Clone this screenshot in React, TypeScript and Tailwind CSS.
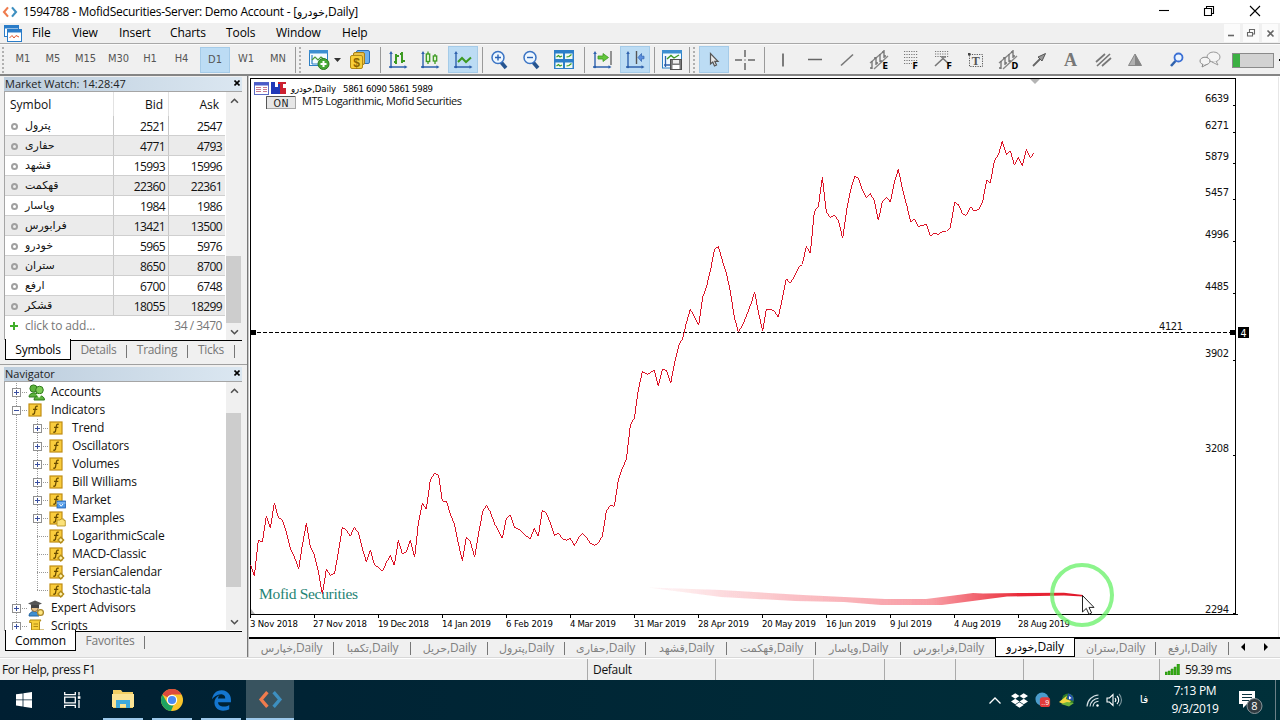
import React from "react";
import { FaDropbox, FaEdgeLegacy } from "react-icons/fa6";

type Kids = { children?: React.ReactNode };

const UI = "font-['Open_Sans','DejaVu_Sans',sans-serif]";

function Ico({ children, s = 20 }: Kids & { s?: number }) {
  return (
    <svg width={s} height={s} viewBox={`0 0 ${s} ${s}`} fill="none" className="block shrink-0">
      {children}
    </svg>
  );
}

function Axes() {
  return (
    <g stroke="#2f62ad" strokeWidth="1.4" fill="#2f62ad">
      <path d="M3 3V18M1 17H18" />
      <path d="M1.2 4L3 1L4.8 4ZM16.5 15.2L19.5 17L16.5 18.8Z" stroke="none" />
      <circle cx="3" cy="17" r="1.2" stroke="none" />
    </g>
  );
}

const Mt5Logo = ({ size }: { size: number }) => (
  <svg width={size} height={size} viewBox="0 0 24 24" fill="none" strokeWidth="3.2">
    <path d="M9 5L3 12L9 19" stroke="#ef7b4d" />
    <path d="M15 5L21 12L15 19" stroke="#3d8fc0" />
  </svg>
);

/* ---------- Toolbar ---------- */

const timeframes = [
  { t: "M1", c: "w-[30px]" },
  { t: "M5", c: "w-[30px]" },
  { t: "M15", c: "w-[35px]" },
  { t: "M30", c: "w-[31px]" },
  { t: "H1", c: "w-[32px]" },
  { t: "H4", c: "w-[31px]" },
  { t: "D1", c: "w-[30px] ml-[3px] bg-[#bcdcf4] border border-[#a5cbe8] pt-px" },
  { t: "W1", c: "w-[32px]" },
  { t: "MN", c: "w-[32px]" },
];

const Cell = ({ c, children }: Kids & { c: string }) => (
  <div className={`flex h-[27px] shrink-0 items-center justify-center ${c}`}>{children}</div>
);
const Sep = ({ c }: { c: string }) => (
  <div className={`flex shrink-0 justify-center ${c}`}>
    <div className="h-[26px] w-px bg-[#9a9a9a]" />
  </div>
);
const Grip = ({ c }: { c: string }) => (
  <div className={`h-[26px] w-[2px] shrink-0 bg-[repeating-linear-gradient(#b0b0b0_0_2px,transparent_2px_4px)] ${c}`} />
);
const ACTIVE = "bg-[#bcdcf4] border border-[#a5cbe8]";

const Channel = ({ letter }: { letter: string }) => (
  <Ico s={22}>
    <path d="M2 14L15 3M6 20L20 7" stroke="#888" strokeWidth="1.4" />
    <path d="M4 12V20M2 19H4M8 8V16M6 9H8M8 14H10M12 5V13M12 12H14M16 1V9M14 3H16M16 7H18" stroke="#707070" strokeWidth="1.3" />
    <text x="14.5" y="20" fontSize="9" fontWeight="700" fill="#000" fontFamily="DejaVu Sans Condensed">{letter}</text>
  </Ico>
);

function Toolbar() {
  return (
    <div className="flex h-[32px] items-center border-b-2 border-[#858585] border-t border-t-[#fafafa] bg-[#f0f0f0]">
      <Grip c="ml-[2px] mr-[4px]" />
      {timeframes.map((f) => (
        <div key={f.t} className={`flex h-[26px] shrink-0 items-center justify-center text-[11px] text-[#555] font-['DejaVu_Sans_Condensed','DejaVu_Sans',sans-serif] ${f.c}`}>
          {f.t}
        </div>
      ))}
      <Sep c="w-[2px]" />
      <Grip c="ml-[3px] mr-[2px]" />
      <Cell c="w-[31px]">
        <Ico s={22}>
          <rect x="1.5" y="1.5" width="18" height="15" fill="#f4fbff" stroke="#2d7fc4" />
          <rect x="1" y="1" width="19" height="3.5" fill="#3d8fd1" />
          <path d="M4 6V15M4 15H12" stroke="#2d7fc4" strokeWidth="1.2" />
          <path d="M4 11L7 8L10 11L13 8L17 11" stroke="#4b9a3a" strokeWidth="1.2" />
          <circle cx="15.5" cy="15" r="5.5" fill="#45a835" stroke="#2c7a22" />
          <path d="M15.5 12V18M12.5 15H18.5" stroke="#fff" strokeWidth="2" />
        </Ico>
      </Cell>
      <Cell c="w-[7px]">
        <svg width="7" height="4" viewBox="0 0 7 4"><path d="M0 0H7L3.5 4Z" fill="#333" /></svg>
      </Cell>
      <Cell c="w-[38px]">
        <Ico s={22}>
          <rect x="7.5" y="1.5" width="13" height="13" rx="1.5" fill="#6fb1ec" stroke="#2c6fb5" />
          <rect x="4.5" y="3.5" width="11" height="12" rx="1.5" fill="#e9c34b" stroke="#a87f14" />
          <rect x="1.5" y="6.5" width="12" height="13" rx="1.5" fill="#f8cf3a" stroke="#b18a17" />
          <text x="4.2" y="17.5" fontSize="12" fontWeight="700" fill="#8c6500" fontFamily="Liberation Sans">$</text>
        </Ico>
      </Cell>
      <Sep c="w-[3px]" />
      <Cell c="w-[32px]">
        <Ico>
          <Axes />
          <path d="M8 4V14M6 12H8M8 6H11M14 2V13M12 4H14M14 11H17" stroke="#3c9a22" strokeWidth="2" />
        </Ico>
      </Cell>
      <Cell c="w-[32px]">
        <Ico>
          <Axes />
          <path d="M8 1.5V14M15 4V14" stroke="#3c9a22" strokeWidth="1.3" />
          <rect x="6.3" y="4" width="3.4" height="7.5" fill="#dff5cf" stroke="#3c9a22" strokeWidth="1.3" />
          <rect x="13.3" y="6" width="3.4" height="5" fill="#dff5cf" stroke="#3c9a22" strokeWidth="1.3" />
        </Ico>
      </Cell>
      <Cell c={`mx-[2px] w-[30px] ${ACTIVE}`}>
        <Ico>
          <Axes />
          <path d="M5 12L9 8L13 12L18 7.5" stroke="#3c9a22" strokeWidth="2" />
        </Ico>
      </Cell>
      <Sep c="w-[4px]" />
      {["in", "out"].map((k) => (
        <Cell key={k} c="w-[32px]">
          <Ico>
            <path d="M10.5 11.5L16 18" stroke="#26548f" strokeWidth="3.6" />
            <circle cx="8" cy="7.5" r="6" fill="#eef7ff" stroke="#3b74c4" strokeWidth="1.5" />
            <path d={k === "in" ? "M5 7.5H11M8 4.5V10.5" : "M5 7.5H11"} stroke="#2b63b5" strokeWidth="1.4" />
          </Ico>
        </Cell>
      ))}
      <Cell c="w-[32px]">
        <Ico>
          <rect x="0" y="0" width="20" height="19" fill="#2c7fc9" />
          <path d="M1.5 3.5H9V9H1.5ZM11 3.5H18.5V9H11ZM1.5 12.5H9V18H1.5ZM11 12.5H18.5V18H11Z" fill="#f1fbf4" />
          <path d="M2.5 7L4.5 5.5L6 7L8 6M12.5 7L15 6.5L17.5 4.5M2.5 16L4.5 14.5L6 16L8 15M12.5 16L15 15.5L17.5 13.5" stroke="#3c9a22" strokeWidth="1.2" />
        </Ico>
      </Cell>
      <Sep c="w-[8px]" />
      <Cell c="w-[28px]">
        <Ico>
          <Axes />
          <path d="M19 1V15" stroke="#555" strokeWidth="1.2" />
          <path d="M6 6H11V3.5L16.5 7.5L11 11.5V9H6Z" fill="#62c63a" stroke="#3c9a22" strokeWidth=".8" />
        </Ico>
      </Cell>
      <Cell c={`ml-[4px] mr-[2px] w-[30px] ${ACTIVE}`}>
        <Ico>
          <Axes />
          <path d="M11.5 1V14" stroke="#555" strokeWidth="1.4" />
          <path d="M19 6.2V8.8H16.5V11.5L13 7.5L16.5 3.5V6.2Z" fill="#5b8fe0" stroke="#2f62ad" strokeWidth=".7" />
        </Ico>
      </Cell>
      <Sep c="w-[4px]" />
      <Cell c="w-[32px]">
        <Ico>
          <rect x=".5" y="1" width="19" height="17" fill="#f4fbff" stroke="#2d7fc4" />
          <rect x="0" y="0" width="20" height="3.5" fill="#3d8fd1" />
          <path d="M3.5 6V17M2 15H8" stroke="#2f62ad" strokeWidth="1.3" />
          <path d="M5 9L9 5.5L12 8L17 5" stroke="#3c9a22" strokeWidth="1.4" />
          <rect x="8.5" y="9.5" width="11" height="10" fill="#7b7b7b" stroke="#505050" />
          <rect x="11" y="10" width="6" height="3.5" fill="#eee" />
          <rect x="10.5" y="15" width="7" height="4" fill="#fff" />
        </Ico>
      </Cell>
      <Sep c="w-[2px]" />
      <Grip c="ml-[3px] mr-[4px]" />
      <Cell c={`w-[30px] ${ACTIVE}`}>
        <Ico s={16}>
          <path d="M4.5 1.5V12L6.8 10L8.5 14L10.5 13L8.8 9.3H12Z" fill="#e8e8e8" stroke="#555" strokeWidth="1.2" />
        </Ico>
      </Cell>
      <Cell c="w-[32px]">
        <Ico><path d="M10 0V7M10 13V20M0 10H7M13 10H20M9.5 10H10.5" stroke="#666" strokeWidth="1.5" /></Ico>
      </Cell>
      <Sep c="w-[6px]" />
      <Cell c="w-[32px]"><Ico><path d="M10 3.5V16.5" stroke="#555" strokeWidth="1.5" /></Ico></Cell>
      <Cell c="w-[32px]"><Ico><path d="M3 9.5H17" stroke="#666" strokeWidth="1.5" /></Ico></Cell>
      <Cell c="w-[32px]"><Ico><path d="M4 15.5L16 4.5" stroke="#777" strokeWidth="1.6" /></Ico></Cell>
      <Cell c="w-[32px]"><Channel letter="E" /></Cell>
      <Cell c="w-[32px]">
        <Ico s={22}>
          <path d="M4 2.5H18M4 5.5H18M4 8.5H18M4 11.5H18M4 14.5H12" stroke="#777" strokeWidth="1.2" strokeDasharray="1.2 1.2" />
          <text x="12.5" y="20" fontSize="9" fontWeight="700" fill="#000" fontFamily="DejaVu Sans Condensed">F</text>
        </Ico>
      </Cell>
      <Cell c="w-[32px]">
        <Ico s={22}>
          <path d="M3 2.5H17M3 5H17M3 7.5H17" stroke="#777" strokeWidth="1.2" strokeDasharray="1.2 1.2" />
          <path d="M3 17L11 9.5L17 15M9 8H14" stroke="#777" strokeWidth="1.6" />
          <text x="14.5" y="20" fontSize="9" fontWeight="700" fill="#000" fontFamily="DejaVu Sans Condensed">F</text>
        </Ico>
      </Cell>
      <Cell c="w-[33px]">
        <Ico>
          <rect x="3.5" y="4.5" width="13" height="12" stroke="#555" strokeDasharray="1.2 1.2" />
          <rect x="2" y="3" width="2.5" height="2.5" fill="#444" />
          <text x="5.8" y="15" fontSize="12" fontWeight="700" fill="#555" fontFamily="Liberation Serif">T</text>
        </Ico>
      </Cell>
      <Cell c="w-[32px]"><Channel letter="D" /></Cell>
      <Cell c="w-[30px]">
        <Ico>
          <path d="M4 16L11 9" stroke="#666" strokeWidth="1.8" />
          <path d="M16.5 3.5L9 7L13 11Z" fill="#999" stroke="#555" />
        </Ico>
      </Cell>
      <Cell c="w-[33px]">
        <div className="font-['Liberation_Serif',serif] text-[18px] font-bold leading-none text-[#777]">A</div>
      </Cell>
      <Cell c="w-[32px]"><Ico><path d="M3 12L12 4M4 16L17 4M9 16L18 8" stroke="#777" strokeWidth="1.7" /></Ico></Cell>
      <Cell c="w-[32px]">
        <Ico>
          <path d="M10 4L16.5 15.5H3.5Z" fill="#b0b0b0" stroke="#888" />
          <path d="M10 4L16.5 15.5H10Z" fill="#858585" />
        </Ico>
      </Cell>
      <Cell c="ml-[10px] w-[32px]">
        <Ico s={16}>
          <path d="M6.5 9L2 14" stroke="#2f62ad" strokeWidth="2.6" />
          <circle cx="9.5" cy="5.5" r="4" fill="#eaf4ff" stroke="#3b6fd4" strokeWidth="1.8" />
        </Ico>
      </Cell>
      <Cell c="w-[34px]">
        <Ico s={22}>
          <ellipse cx="14.5" cy="8" rx="6.5" ry="5" fill="#f4f4f4" stroke="#999" />
          <path d="M17 12L19 16L13 13" fill="#f4f4f4" stroke="#999" />
          <ellipse cx="6" cy="12" rx="5" ry="3.8" fill="#f4f4f4" stroke="#888" />
          <path d="M4 15L3 18L7.5 15.6" fill="#f4f4f4" stroke="#888" />
        </Ico>
      </Cell>
      <div className="ml-[5px] mt-px flex h-[15px] w-[42px] shrink-0 border border-[#8a8a8a] bg-[#d2d2d2]">
        <div className="w-[7px] bg-[#3cb043]" />
      </div>
      <div className="ml-[5px] h-[2px] w-[2px] bg-black" />
    </div>
  );
}

/* ---------- Left panels ---------- */

const quotes = [
  ["پترول", "2521", "2547"],
  ["حفاری", "4771", "4793"],
  ["قشهد", "15993", "15996"],
  ["قهکمت", "22360", "22361"],
  ["وپاسار", "1984", "1986"],
  ["فرابورس", "13421", "13500"],
  ["خودرو", "5965", "5976"],
  ["ستران", "8650", "8700"],
  ["ارفع", "6700", "6748"],
  ["قشکر", "18055", "18299"],
];

const PanelHead = ({ children }: Kids) => (
  <div className="flex h-[14px] items-center justify-between bg-linear-to-r from-[#bccddd] to-[#dbe7f1] pb-[2px] pl-px pr-[2px] text-[11px] leading-none text-[#222]">
    <span>{children}</span>
    <svg width="6" height="6" viewBox="0 0 6 6" stroke="#000" strokeWidth="1.6"><path d="M.5 .5L5.5 5.5M5.5 .5L.5 5.5" /></svg>
  </div>
);

const Chevron = ({ up }: { up?: boolean }) => (
  <svg width="9" height="6" viewBox="0 0 10 7" fill="none" stroke="#505050" strokeWidth="1.9">
    <path d={up ? "M1 5.5L5 1.5L9 5.5" : "M1 1.5L5 5.5L9 1.5"} />
  </svg>
);

const Scroll = ({ thumb }: { thumb: string }) => (
  <div className="flex w-[16px] shrink-0 flex-col items-center bg-[#f0f0f0]">
    <div className="flex h-[18px] items-center"><Chevron up /></div>
    <div className="flex w-full flex-1 flex-col pr-px"><div className={`bg-[#cdcdcd] ${thumb}`} /></div>
    <div className="flex h-[16px] items-center"><Chevron /></div>
  </div>
);

function MarketWatch() {
  return (
    <div className="flex h-[288px] flex-col border-b border-[#a0a0a0] pl-[4px] pr-[5px]">
      <PanelHead>Market Watch: 14:28:47</PanelHead>
      <div className="flex h-[249px] border-l border-t border-[#a5a5a5] bg-white text-[12px] text-[#111]">
        <div className="flex w-[220px] shrink-0 flex-col">
          <div className="flex h-[24px] shrink-0 items-center">
            <div className="h-full w-[109px] border-r border-[#e2e2e2] pl-[5px] leading-[25px]">Symbol</div>
            <div className="h-full w-[55px] border-r border-[#e2e2e2] pr-[5px] text-right leading-[25px]">Bid</div>
            <div className="h-full w-[56px] pr-[6px] text-right leading-[25px]">Ask</div>
          </div>
          {quotes.map(([s, b, a], i) => (
            <div key={s} className={`flex h-[20px] shrink-0 items-center border-b border-[#cfcfcf] leading-[20px] ${i % 2 ? "bg-[#ebebeb]" : "bg-white"}`}>
              <div className="flex h-full w-[109px] items-center border-r border-[#c8c8c8] pl-[6px] pt-px">
                <div className="mr-[7px] h-[7px] w-[7px] rounded-full border-2 border-[#a0a0a0]" />
                <span className="font-['DejaVu_Sans',sans-serif] text-[11px]">{s}</span>
              </div>
              <div className="h-full w-[55px] border-r border-[#c8c8c8] pr-[3px] pt-px text-right leading-[19px] tracking-[-0.6px]">{b}</div>
              <div className="h-full w-[56px] pr-[3px] pt-px text-right leading-[19px] tracking-[-0.6px]">{a}</div>
            </div>
          ))}
          <div className="flex h-[20px] items-center pl-[5px] pr-[3px] text-[#777]">
            <svg width="8" height="8" viewBox="0 0 8 8" stroke="#3fae29" strokeWidth="2"><path d="M4 0V8M0 4H8" /></svg>
            <span className="ml-[7px] flex-1 tracking-[-0.15px]">click to add...</span>
            <span className="tracking-[-0.45px]">34 / 3470</span>
          </div>
        </div>
        <div className="w-px" />
        <Scroll thumb="mt-[146px] h-[67px]" />
      </div>
      <div className="flex h-[20px] text-[12px] leading-[18px] text-[#777]">
        <div className="ml-px mt-[-1px] h-[21px] w-[66px] shrink-0 border border-t-0 border-black bg-white text-center leading-[21px] tracking-[-0.25px] text-black">Symbols</div>
        <div className="flex flex-1 border-t border-black tracking-[-0.3px]">
          <div className="w-[55px] text-center">Details</div>
          <div className="mt-[4px] h-[13px] w-px bg-[#777]" />
          <div className="w-[60px] text-center">Trading</div>
          <div className="mt-[4px] h-[13px] w-px bg-[#777]" />
          <div className="w-[46px] text-center">Ticks</div>
          <div className="mt-[4px] h-[13px] w-px bg-[#777]" />
        </div>
      </div>
    </div>
  );
}

type Kind = "acc" | "f" | "market" | "folder" | "ind" | "ea" | "script";
const tree: { l: 0 | 1; t: string; k: Kind; e?: "+" | "-" }[] = [
  { l: 0, t: "Accounts", k: "acc", e: "+" },
  { l: 0, t: "Indicators", k: "f", e: "-" },
  { l: 1, t: "Trend", k: "f", e: "+" },
  { l: 1, t: "Oscillators", k: "f", e: "+" },
  { l: 1, t: "Volumes", k: "f", e: "+" },
  { l: 1, t: "Bill Williams", k: "f", e: "+" },
  { l: 1, t: "Market", k: "market", e: "+" },
  { l: 1, t: "Examples", k: "folder", e: "+" },
  { l: 1, t: "LogarithmicScale", k: "ind" },
  { l: 1, t: "MACD-Classic", k: "ind" },
  { l: 1, t: "PersianCalendar", k: "ind" },
  { l: 1, t: "Stochastic-tala", k: "ind" },
  { l: 0, t: "Expert Advisors", k: "ea", e: "+" },
  { l: 0, t: "Scripts", k: "script", e: "+" },
];

function NodeIcon({ k }: { k: Kind }) {
  if (k === "acc")
    return (
      <Ico s={17}>
        <circle cx="5.5" cy="4.5" r="3.6" fill="#5cb33c" stroke="#2f7a1b" />
        <path d="M1 13C1 8 10 7 11 13Z" fill="#5cb33c" stroke="#2f7a1b" />
        <circle cx="11.5" cy="6" r="3.8" fill="#7ccc55" stroke="#2f7a1b" />
        <path d="M6 16C6 10 16.5 10 16.5 16Z" fill="#5cb33c" stroke="#2f7a1b" />
        <path d="M8 10L11 14L14.5 10Z" fill="#f4fbe8" />
      </Ico>
    );
  if (k === "ea")
    return (
      <Ico s={17}>
        <path d="M1 16C1 10 11 10 11 16Z" fill="#3f8fd0" stroke="#2263a0" />
        <circle cx="6.8" cy="8" r="3.5" fill="#e8c48e" stroke="#8a6a3a" />
        <path d="M0 3.5L7 .5L14 3.5L7 6.5Z" fill="#555" />
        <path d="M3 5V8H11V5" fill="#444" />
        <circle cx="12.5" cy="12.5" r="2.9" fill="#ffe680" stroke="#a8862a" strokeWidth="1.3" />
      </Ico>
    );
  if (k === "script")
    return (
      <Ico s={17}>
        <path d="M2 2H13L11.5 4V13H3.5V4.5H1.5Z" fill="#f8cf3a" stroke="#b18a17" />
        <path d="M4 12H16L13 15.5H2Z" fill="#f3c02a" stroke="#b18a17" />
        <path d="M5.5 6H10M5.5 8.5H10" stroke="#b18a17" />
      </Ico>
    );
  return (
    <Ico s={17}>
      <rect x="1" y="2" width="12" height="12" fill="#f9cc3c" stroke="#c08d13" strokeWidth="1.2" />
      <path d="M9.8 4.3C7.8 3.6 7.5 5 7.2 7L6.5 11C6.2 12.4 5.2 12.4 4.2 12M5 7.3H9.3" stroke="#6a4c00" strokeWidth="1.3" />
      {k === "market" && (
        <>
          <rect x="8" y="9" width="8.5" height="7" fill="#4b97e6" stroke="#225fae" strokeWidth=".8" />
          <path d="M8 11H16.5" stroke="#bfe0ff" strokeWidth=".8" />
          <path d="M10.5 12L12.2 14.2L14 12" stroke="#fff" />
        </>
      )}
      {k === "folder" && <path d="M8 10H11L12 9H15V10.5H16.3V16H8Z" fill="#fbe27a" stroke="#b18a17" strokeWidth=".8" />}
      {k === "ind" && <path d="M11.8 9.3L14.6 12.1L11.8 15L9 12.1Z" fill="#fff3b0" stroke="#b18a17" strokeWidth="1.4" />}
    </Ico>
  );
}

function TreeLines({ l, e, last }: { l: 0 | 1; e?: "+" | "-"; last: boolean }) {
  const cx = l ? 32 : 11;
  const w = l ? 44 : 23;
  return (
    <svg width={w} height="18" viewBox={`0 0 ${w} 18`} fill="none" shapeRendering="crispEdges" className="shrink-0">
      <g stroke="#999" strokeDasharray="1 1">
        <path d="M11.5 0V18" />
        {l === 1 && <path d={last ? "M32.5 0V10" : "M32.5 0V18"} />}
        <path d={`M${cx} 9.5H${cx + 11}`} />
      </g>
      {e && (
        <>
          <rect x={cx - 3.5} y="5.5" width="8" height="8" fill="#fff" stroke="#919191" />
          <path d={`M${cx - 2} 9.5H${cx + 3}${e === "+" ? `M${cx + 0.5} 7V12` : ""}`} stroke="#3a4fa0" />
        </>
      )}
    </svg>
  );
}

function Navigator() {
  return (
    <div className="flex flex-1 flex-col border-b border-[#a0a0a0] pl-[4px] pr-[5px] pt-[2px]">
      <PanelHead>Navigator</PanelHead>
      <div className="flex h-[250px] overflow-hidden border-l border-t border-[#a5a5a5] bg-white pb-px text-[12px] text-[#111]">
        <div className="w-[221px] shrink-0 overflow-hidden pt-px">
          {tree.map((n, i) => (
            <div key={n.t} className="flex h-[18px] items-center">
              <TreeLines l={n.l} e={n.e} last={i === 11} />
              <NodeIcon k={n.k} />
              <span className="ml-[6px] whitespace-nowrap leading-[18px] tracking-[-0.15px]">{n.t}</span>
            </div>
          ))}
        </div>
        <Scroll thumb="mt-[13px] h-[174px]" />
      </div>
      <div className="flex h-[20px] text-[12px] leading-[18px] text-[#777]">
        <div className="ml-px mt-[-1px] h-[21px] w-[71px] shrink-0 border border-t-0 border-black bg-white text-center leading-[21px] tracking-[-0.1px] text-black">Common</div>
        <div className="flex flex-1 border-t border-black tracking-[-0.2px]">
          <div className="w-[68px] text-center">Favorites</div>
          <div className="mt-[4px] h-[13px] w-px bg-[#777]" />
        </div>
      </div>
    </div>
  );
}

/* ---------- Chart ---------- */

const seriesA =
  "2,495 13,527 25,420 37,426 49,349 61,385 73,309 85,352 97,360 109,396 121,445 133,470 146,507 157,436 169,370 181,440 193,465 205,515 217,583 229,508 241,526 254,520 266,450 277,382 289,391 301,408 313,382 326,400 337,445 349,485 361,449 373,494 385,502 397,514 409,488 421,466 433,496 445,421 457,462 469,456 481,421 494,472 505,370 517,310 529,328 541,240 554,219 566,226 577,303 590,304 601,343 614,375 625,430 637,482 649,411 661,424 674,472 686,400 698,335 709,316 721,335 733,370 745,391 757,415 769,355 781,346 793,381 805,387 817,397 829,408 841,416 853,385 865,409 877,331 889,340 901,368 913,406 925,399 937,416 949,421 961,415 973,437 985,415 997,400 1009,412 1021,430 1033,436 1045,430 1057,408 1069,334 1081,315 1093,319 1105,240 1117,205 1129,178 1141,76 1153,54";
const seriesB =
  "223,565 235,480 247,424 262,433 283,421 295,469 307,418 319,421 332,460 344,398 356,348 368,325 380,275 391,238 404,262 416,286 428,202 439,172 452,118 463,60 475,49 487,92 500,133 511,185 523,262 535,306 548,286 560,256 572,224 584,187 596,250 608,304 619,238 631,238 643,244 655,262 667,205 679,146 691,160 704,138 716,112 727,103 739,49";
const seriesC =
  "139,379 151,400 163,274 175,260 187,172 199,277 211,292 223,286 235,301 248,355 260,270 272,210 284,169 295,174 307,210 319,233 331,220 343,243 355,301 367,246 379,232 391,246 403,187 415,148 428,210 440,255 452,307 463,297 475,319 487,316 499,313 511,348 523,340 535,343 547,335 559,334 571,322 584,247 596,255 608,282 618,286 632,261 643,273 656,268 668,245 680,181 691,189 703,123 716,102 727,64 739,103 751,92 763,135 775,112 787,138 799,88 811,114 822,99";

const prices: [string, number][] = [
  ["6639", 98], ["6271", 125], ["5879", 156], ["5457", 192], ["4996", 234],
  ["4485", 286], ["3902", 353], ["3208", 448], ["2294", 609],
];
const dates: [string, number, number][] = [
  ["3 Nov 2018", 250, 48], ["27 Nov 2018", 313, 54], ["19 Dec 2018", 378, 51], ["14 Jan 2019", 442, 49],
  ["6 Feb 2019", 506, 47], ["4 Mar 2019", 570, 46], ["31 Mar 2019", 634, 52], ["28 Apr 2019", 698, 51],
  ["20 May 2019", 762, 54], ["16 Jun 2019", 826, 50], ["9 Jul 2019", 890, 42], ["4 Aug 2019", 954, 47],
  ["28 Aug 2019", 1018, 52],
];

function Chart() {
  const tahoma = "'DejaVu Sans Condensed','DejaVu Sans',sans-serif";
  return (
    <svg width="1031" height="560" viewBox="249 77 1031 560" className="block bg-white" fontFamily={tahoma}>
      <defs>
        <linearGradient id="trail" gradientUnits="userSpaceOnUse" x1="652" y1="0" x2="1083" y2="0">
          <stop offset="0" stopColor="#f03040" stopOpacity="0.04" />
          <stop offset=".3" stopColor="#f03040" stopOpacity=".28" />
          <stop offset=".65" stopColor="#f03040" stopOpacity=".48" />
          <stop offset=".85" stopColor="#e82030" stopOpacity=".95" />
          <stop offset="1" stopColor="#e01828" stopOpacity="1" />
        </linearGradient>
        <filter id="soft"><feGaussianBlur stdDeviation="0.6" /></filter>
      </defs>
      <g stroke="#000" shapeRendering="crispEdges" fill="none">
        <path d="M250.5 78V615M250 78.5H1236M1235.5 78V614M250 614.5H1238" />
        {dates.map(([t], i) => <path key={t} d={`M${250.5 + 64 * i} 614V618`} />)}
        {prices.map(([t, y]) => <path key={t} d={`M1233 ${(t === "2294" ? 613 : y + 7) + 0.5}H1236`} />)}
        <path d="M257 332.5H1230" strokeDasharray="3.5 2.5" />
      </g>
      <path d="M1030 79H1040L1035 84Z" fill="#b4b4b4" />
      <path d="M251 609L255 614H251Z" fill="#b4b4b4" />
      <path d="M1278.5 77V637" stroke="#e6e6e6" />
      <text x="259" y="599" fontSize="15.5" fill="#1f8474" fontFamily="'Liberation Serif',serif" textLength="99">Mofid Securities</text>
      <g fill="none" stroke="#dc1428" strokeWidth="3" shapeRendering="crispEdges">
        <polyline transform="translate(250 400) scale(.33333)" points={seriesA} />
        <polyline transform="translate(560 230) scale(.33333)" points={seriesB} />
        <polyline transform="translate(760 120) scale(.33333)" points={seriesC} />
      </g>
      <rect x="251" y="330" width="5" height="5" />
      <rect x="1230" y="330" width="5" height="5" />
      <rect x="1238" y="327" width="11" height="11" />
      <text x="1240.4" y="336.5" fontSize="10.5" fill="#fff">4</text>
      <g fontSize="11" fill="#111">
        {prices.map(([t, y]) => <text key={t} x="1205" y={y + 4} textLength="24">{t}</text>)}
        <text x="1159" y="330" textLength="24">4121</text>
      </g>
      <g fontSize="9.5" fill="#000">
        {dates.map(([t, x, w]) => <text key={t} x={x} y="627" textLength={w}>{t}</text>)}
        <text x="291" y="92" textLength="45">خودرو,Daily</text>
        <text x="343" y="92" textLength="90">5861 6090 5861 5989</text>
      </g>
      <g>
        <rect x="254.5" y="82.5" width="14" height="12" fill="#fff" stroke="#5b6bc4" />
        <path d="M254 84H269" stroke="#4a5ac8" strokeWidth="3" />
        <path d="M256 87.5H261M256 89.5H261M256 91.5H261M263 87.5H267M263 89.5H267M263 91.5H267" stroke="#c87a90" />
        <path d="M271 82H275V87H278V82H280V94H271Z" fill="#2038b8" />
        <path d="M280 84H283V88H286V94H280Z" fill="#cc2030" />
        <path d="M278 82H286V84H278Z" fill="#cc2030" />
      </g>
      <rect x="266.5" y="96.5" width="29" height="12" fill="#e6e6e6" stroke="#a8a8a8" />
      <path d="M266.5 109V96.5H295" fill="none" stroke="#555" />
      <text x="273.5" y="106.5" fontSize="10.5" fill="#222" textLength="15">ON</text>
      <text x="302" y="105" fontSize="11" fill="#111" fontFamily="'Open Sans',sans-serif" textLength="160">MT5 Logarithmic, Mofid Securities</text>
      <path
        d="M648 587.5L721 590L803 595L885 599L926 599L950 596L973 593L983 593.5L1024 593L1064 592.8L1083 595V596.5L1064 595.5L1007 596.5L942 605L881 605L844 602L795 601L721 597Z"
        fill="url(#trail)" filter="url(#soft)"
      />
      <circle cx="1082" cy="595" r="30" fill="none" stroke="#5ff05f" strokeOpacity=".72" strokeWidth="4" />
      <path d="M1082.5 595.5V612L1086.3 608.4L1089 614.3L1091.6 613L1089 607.4H1094Z" fill="#fff" stroke="#222" />
    </svg>
  );
}

const chartTabs: [string, string][] = [
  ["خپارس", "w-[85px] border-r"], ["تکمبا", "w-[77px] border-r"], ["حریل", "w-[77px] border-r"],
  ["پترول", "w-[77px] border-r"], ["حفاری", "w-[81px] border-r"], ["قشهد", "w-[81px] border-r"],
  ["قهکمت", "w-[89px] border-r"], ["وپاسار", "w-[85px] border-r"], ["فرابورس", "w-[94px]"],
  ["خودرو", "active"], ["ستران", "w-[81px] border-r"], ["ارفع", "w-[73px] border-r"],
];

function ChartTabs() {
  return (
    <div className="flex h-[20px] border-t-2 border-black bg-[#f0f0f0] text-[12px] leading-[18px] text-[#808080]">
      {chartTabs.map(([t, c]) =>
        c === "active" ? (
          <div key={t} className="mt-[-1px] h-[19px] w-[80px] shrink-0 whitespace-nowrap border border-t-0 border-black bg-white text-center tracking-[-0.25px] text-black">
            <span className="font-['DejaVu_Sans',sans-serif] text-[11px]">{t}</span>,Daily
          </div>
        ) : (
          <div key={t} className={`my-[3px] flex h-[13px] shrink-0 items-center justify-center whitespace-nowrap border-[#777] pl-px tracking-[-0.25px] ${c}`}>
            <span><span className="font-['DejaVu_Sans',sans-serif] text-[11px]">{t}</span>,Daily</span>
          </div>
        )
      )}
      <svg width="30" height="8" viewBox="0 0 30 8" className="ml-[11px] mt-[4px]">
        <path d="M5 0V8L1 4ZM24 0V8L28 4Z" fill="#000" />
      </svg>
    </div>
  );
}

/* ---------- Bottom bars ---------- */

function StatusBar() {
  return (
    <div className="flex h-[22px] items-center border-t border-white bg-[#f0f0f0] text-[12px] leading-[22px] text-[#111] shadow-[0_-1px_0_#d8d8d8]">
      <div className="h-full w-[588px] border-r border-[#aaa] pl-[2px] tracking-[-0.38px]">For Help, press F1</div>
      <div className="h-full w-[128px] border-r border-[#aaa] pl-[5px] tracking-[-0.3px]">Default</div>
      <div className="h-full w-[98px] border-r border-[#aaa]" />
      <div className="h-full w-[71px] border-r border-[#aaa]" />
      <div className="h-full w-[71px] border-r border-[#aaa]" />
      <div className="h-full w-[68px] border-r border-[#aaa]" />
      <div className="h-full w-[70px] border-r border-[#aaa]" />
      <div className="h-full w-[66px] border-r border-[#aaa]" />
      <svg width="15" height="11" viewBox="0 0 15 11" className="ml-[5px] mr-[5px]" fill="#35ad14">
        <path d="M0 8H2.2V11H0ZM3 7H5.2V11H3ZM6 5H8.2V11H6ZM9 3H11.2V11H9ZM12 0H14.5V11H12Z" stroke="#2a8a10" strokeWidth=".5" />
      </svg>
      <span className="tracking-[-0.55px]">59.39 ms</span>
    </div>
  );
}

function Taskbar() {
  return (
    <div className="flex h-[40px] bg-linear-to-r from-[#001f32] to-[#00303a] text-white">
      <div className="flex w-[48px] items-center justify-center">
        <svg width="16" height="16" viewBox="0 0 16 16" fill="#fff">
          <path d="M0 2.3L6.6 1.4V7.5H0ZM7.4 1.3L16 0V7.5H7.4ZM0 8.3H6.6V14.5L0 13.6ZM7.4 8.3H16V16L7.4 14.7Z" />
        </svg>
      </div>
      <div className="flex w-[48px] items-center justify-center">
        <svg width="17" height="16" viewBox="0 0 17 16" fill="none" stroke="#fff" strokeWidth="1.3">
          <path d="M.7 0V2.7H11.3V0M.7 16V13.3H11.3V16M.7 5.2H11.3V10.8H.7ZM15 0V3.5M15 8V16" />
          <rect x="13.8" y="4.2" width="2.6" height="2.6" fill="#fff" stroke="none" />
        </svg>
      </div>
      <div className="ml-[7px] flex w-[40px] items-center justify-center border-b-2 border-[#9cc8ea]">
        <svg width="22" height="20" viewBox="0 0 22 20">
          <path d="M1 1H9L10.5 3H21V19H1Z" fill="#f2ce63" />
          <path d="M0 5H22V18H0Z" fill="#fbe394" />
          <path d="M4 11H18V19H14V15H8V19H4Z" fill="#3fa9dc" />
        </svg>
      </div>
      <div className="ml-[9px] flex w-[40px] items-center justify-center border-b-2 border-[#9cc8ea] pt-[2px]">
        <svg width="22" height="22" viewBox="0 0 22 22">
          <circle cx="11" cy="11" r="11" fill="#f8c52c" />
          <path d="M11 0A11 11 0 0 1 20.5 5.5H11A5.5 5.5 0 0 0 6.2 8.3L1.5 5.5A11 11 0 0 1 11 0Z" fill="#dd4b3e" />
          <path d="M1.5 5.5L6.2 13.7A5.5 5.5 0 0 0 12.5 16.3L10 22A11 11 0 0 1 1.5 5.5Z" fill="#1da362" />
          <circle cx="11" cy="11" r="5.2" fill="#fff" />
          <circle cx="11" cy="11" r="4.1" fill="#4a8af4" />
        </svg>
      </div>
      <div className="ml-[9px] flex w-[40px] items-center justify-center border-b-2 border-[#9cc8ea] pt-[2px]">
        <FaEdgeLegacy size={21} color="#1476cf" />
      </div>
      <div className="ml-[5px] flex w-[48px] items-center justify-center border-b-2 border-[#9cc8ea] bg-[#38535f]">
        <Mt5Logo size={25} />
      </div>
      <div className="flex flex-1 items-center">
        <div className="ml-[693px] flex w-[16px] justify-center">
          <svg width="12" height="7" viewBox="0 0 12 7" fill="none" stroke="#fff" strokeWidth="1.3"><path d="M.5 6.5L6 1L11.5 6.5" /></svg>
        </div>
        <div className="flex w-[32px] justify-center"><FaDropbox size={17} color="#fff" /></div>
        <div className="flex w-[16px] justify-center">
          <svg width="18" height="18" viewBox="0 0 18 18">
            <circle cx="8" cy="8" r="7.5" fill="#4b9ccc" />
            <rect x="5.5" y="6" width="11.5" height="11" rx="3" fill="#e23b3b" />
            <text x="7" y="15" fontSize="8" fill="#fff" fontFamily="Liberation Sans">..9</text>
          </svg>
        </div>
        <div className="flex w-[32px] justify-center">
          <svg width="17" height="14" viewBox="0 0 17 14">
            <circle cx="9" cy="6.5" r="6" fill="#2f7d28" />
            <path d="M9 .5A6 6 0 0 1 14.5 8L8 6Z" fill="#2554a8" />
            <path d="M0 9L8 2.5L7 6L12 8L9 12L4 11Z" fill="#f1d640" />
            <path d="M2 11L8 9L15 10L10 13.5Z" fill="#6fb53a" />
            <path d="M10 3L12.5 5L10 6.5Z" fill="#fff" />
          </svg>
        </div>
        <div className="flex w-[18px] justify-center">
          <svg width="13" height="13" viewBox="0 0 13 13" fill="none" stroke="#d5e0e4" strokeWidth="1.1">
            <path d="M1 12.5A12 12 0 0 1 12.5 1M4 12.5A9 9 0 0 1 12.5 4.2M7 12.5A6 6 0 0 1 12.5 7.3" />
            <circle cx="11.5" cy="11.5" r="1.2" fill="#fff" stroke="none" />
          </svg>
        </div>
        <div className="ml-[5px] flex w-[17px] justify-center">
          <svg width="17" height="14" viewBox="0 0 17 14" fill="none" stroke="#fff" strokeWidth="1.1">
            <path d="M1 5H3.5L7 1.5V12.5L3.5 9H1Z" />
            <path d="M9 5A3 3 0 0 1 9 9M11 3A5.5 5.5 0 0 1 11 11" />
            <path d="M13 1A8.5 8.5 0 0 1 13 13" stroke="#7f979e" />
          </svg>
        </div>
        <div className="ml-[12px] w-[18px] text-center font-['DejaVu_Sans',sans-serif] text-[11px]">فا</div>
        <div className="ml-[10px] w-[64px] text-center text-[12px] leading-[18px] tracking-[-0.35px]">
          7:13 PM
          <br />
          9/3/2019
        </div>
        <svg width="28" height="28" viewBox="0 0 28 28" className="ml-[10px] mt-[2px]">
          <path d="M2 4H18V17H10L6 21V17H2Z" fill="#fff" />
          <path d="M5 7.5H15M5 10.5H15M5 13.5H12" stroke="#0b3440" strokeWidth="1.2" />
          <circle cx="17.5" cy="19" r="7.5" fill="#2f3a40" stroke="#8a979c" />
          <text x="14.3" y="23" fontSize="11" fill="#fff" fontFamily="Open Sans">8</text>
        </svg>
        <div className="ml-auto mr-[4px] h-full w-px bg-[#6b8188]" />
      </div>
    </div>
  );
}

const menus: [string, string][] = [
  ["File", "w-[40px]"], ["View", "w-[47px]"], ["Insert", "w-[51px]"], ["Charts", "w-[56px]"],
  ["Tools", "w-[50px]"], ["Window", "w-[66px]"], ["Help", "w-[40px]"],
];

export default function App() {
  return (
    <div className={`flex h-[720px] w-[1280px] flex-col overflow-hidden bg-[#f0f0f0] ${UI}`}>
      <div className="flex h-[23px] shrink-0 items-center bg-white pl-[2px] pt-px text-[12px] text-black">
        <Mt5Logo size={16} />
        <span className="ml-[5px] flex-1 tracking-[-0.26px]">
          1594788 - MofidSecurities-Server: Demo Account - [<span className="font-['DejaVu_Sans',sans-serif] text-[11px]">خودرو</span>,Daily]
        </span>
        <svg width="120" height="14" viewBox="0 0 120 14" fill="none" stroke="#000" strokeWidth="1.1" className="mb-[2px] mr-[4px]">
          <path d="M3 6.5H13" />
          <path d="M48.5 4.5H55.5V11.5H48.5ZM50.5 4.5V2.5H57.5V9.5H55.5" />
          <path d="M94 2L104 12M104 2L94 12" />
        </svg>
      </div>
      <div className="flex h-[21px] shrink-0 items-center border-b border-[#a8a8a8] text-[12px] text-black">
        <svg width="18" height="17" viewBox="0 0 18 17" className="ml-[4px] mr-[10px]" fill="#fff" stroke="#2a7cc8">
          <rect x=".5" y=".5" width="14" height="11" />
          <path d="M0 2H15" strokeWidth="3" />
          <rect x="3.5" y="4.5" width="14" height="12" />
          <path d="M3 6H18" strokeWidth="3" />
          <path d="M5.5 13L8 10.5L10 13L12 10.5L15 12" stroke="#e0552b" fill="none" />
        </svg>
        {menus.map(([t, w]) => (
          <div key={t} className={`shrink-0 tracking-[-0.1px] ${w}`}>{t}</div>
        ))}
        <svg width="56" height="20" viewBox="0 0 56 20" className="ml-auto" fill="none" stroke="#666" strokeWidth="1.6">
          <path d="M0 1H16V19H0ZM19 1H35V19H19ZM38 1H54V19H38Z" fill="#fbfbfb" stroke="none" />
          <path d="M4 12.5H10" />
          <path d="M23.5 9.5H28.5V13H23.5ZM25.5 9V6.5H30.5V11H29" strokeWidth="1.1" />
          <path d="M43.5 7.5L49.5 13.5M49.5 7.5L43.5 13.5" />
        </svg>
      </div>
      <Toolbar />
      <div className="flex h-[582px] shrink-0">
        <div className="flex w-[247px] shrink-0 flex-col pt-px">
          <MarketWatch />
          <Navigator />
        </div>
        <div className="w-[2px] shrink-0 border-l border-[#777] bg-[#c8c8c8]" />
        <div className="flex w-[1031px] shrink-0 flex-col bg-white pt-px">
          <Chart />
          <ChartTabs />
        </div>
      </div>
      <StatusBar />
      <Taskbar />
    </div>
  );
}
